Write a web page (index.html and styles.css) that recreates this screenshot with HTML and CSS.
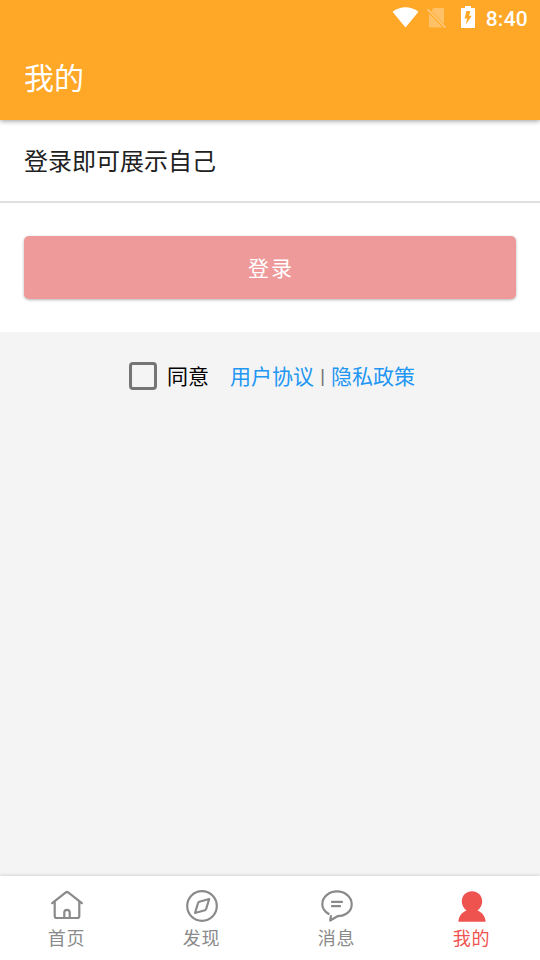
FILE: index.html
```html
<!DOCTYPE html>
<html lang="zh-CN">
<head>
<meta charset="utf-8">
<title>我的</title>
<link rel="stylesheet" href="styles.css">
</head>
<body>
<div class="app">
  <header class="header">
    <div class="status">
      <svg class="wifi" width="28" height="22" viewBox="0 0 28 22"><path fill="#fff" d="M.500 4.700C8-1.400 19-1.400 26.500 4.700L13.500 20.500Z"/></svg>
      <svg class="sim" width="20" height="22" viewBox="0 0 20 22"><path fill="#fff" fill-opacity=".3" d="M6.500 1H16a1 1 0 0 1 1 1V17L4.500 4ZM2 6.500 15.500 20.500H3a1 1 0 0 1-1-1Z"/><path stroke="#fff" stroke-opacity=".36" stroke-width="1.800" d="M.500 2.200 18.500 20.700"/></svg>
      <svg class="battery" width="14" height="22" viewBox="0 0 14 22"><path fill="#fff" fill-rule="evenodd" d="M4 0h6v2h3q1 0 1 1v18q0 1-1 1H1q-1 0-1-1V3q0-1 1-1h3ZM9.300 5H5.500L3.500 12.500h2.700L4.800 18.800 10.800 9.800H8Z"/></svg>
      <span class="clock">8:40</span>
    </div>
    <h1 class="title">我的</h1>
  </header>
  <section class="intro">登录即可展示自己</section>
  <section class="action"><button class="login">登录</button></section>
  <main class="main">
    <div class="terms">
      <span class="checkbox"></span>
      <span class="agree">同意</span>
      <a class="link">用户协议</a>
      <span class="divider">|</span>
      <a class="link">隐私政策</a>
    </div>
  </main>
  <nav class="nav">
    <a class="tab">
      <svg class="icon" viewBox="0 0 32 32"><path d="M1.200 13.200 14.500 2.600q1.500-1.200 3 0L30.800 13.200M3.700 11.500V26q0 2 2 2h20.600q2 0 2-2V11.500M13.300 28v-5.500q0-2.700 2.700-2.700t2.700 2.700V28"/></svg>
      <span class="label">首页</span>
    </a>
    <a class="tab">
      <svg class="icon" viewBox="0 0 32 32"><circle cx="16" cy="16" r="14.800"/><path d="M9 23 12 13.200q.3-1.100 1.300-1.400L23.200 9 20.200 18.800q-.3 1-1.300 1.400Z"/></svg>
      <span class="label">发现</span>
    </a>
    <a class="tab">
      <svg class="icon" viewBox="0 0 32 32"><path d="M7.500 23.800C3.600 21.400 1.300 18 1.300 14.200 1.300 7 7.900 1.300 16 1.300S30.700 7 30.700 14.200 24.300 26.200 16.500 26.200L9.200 30.500 9.900 26.200M11 11.900h10M11 16.200h8"/></svg>
      <span class="label">消息</span>
    </a>
    <a class="tab active">
      <svg class="icon solid" viewBox="0 0 32 32"><path d="M16 1.200C21.700 1.200 26.200 5.500 26.200 11.200c0 4-1.900 7.200-4.700 9.300C26 22.200 29 26 29.600 31.200q0 .600-.6.600H3q-.6 0-.6-.6C3 26 6 22.200 10.500 20.500c-2.800-2.100-4.700-5.300-4.700-9.300C5.800 5.500 10.300 1.200 16 1.200Z"/></svg>
      <span class="label">我的</span>
    </a>
  </nav>
</div>
</body>
</html>
```

FILE: styles.css
```css
* { box-sizing: border-box; }
body {
  margin: 0;
  font-family: Roboto, "Noto Sans CJK SC", sans-serif;
  background: #f4f4f4;
}
.app {
  width: 540px;
  height: 960px;
  display: flex;
  flex-direction: column;
  overflow: hidden;
}
.header {
  position: relative;
  z-index: 1;
  height: 120px;
  flex: none;
  background: #ffa726;
  color: #fff;
  box-shadow: 0 1px 5px rgba(0, 0, 0, .4);
}
.status {
  height: 36px;
  display: flex;
  align-items: center;
  justify-content: flex-end;
  padding-right: 12px;
}
.wifi { margin-right: 7px; }
.sim { margin-right: 14px; }
.battery { margin-right: 11px; margin-top: -2px; }
.clock {
  font-size: 21px;
  font-weight: 500;
  line-height: 36px;
  padding-top: 2px;
  letter-spacing: .25px;
}
.title {
  margin: 0;
  padding-left: 24px;
  font-size: 30px;
  font-weight: 400;
  line-height: 86px;
}
.intro {
  height: 83px;
  flex: none;
  padding-left: 24px;
  font-size: 24px;
  line-height: 84px;
  color: #212121;
  background: #fff;
  border-bottom: 2px solid #e0e0e0;
}
.action {
  height: 129px;
  flex: none;
  padding: 33px 24px;
  background: #fff;
}
.login {
  display: block;
  width: 100%;
  height: 63px;
  padding: 0 0 2px 2px;
  border: 0;
  border-radius: 5px;
  background: #ef9a9a;
  color: #fff;
  font-family: inherit;
  font-size: 21px;
  letter-spacing: 2px;
  box-shadow: 0 1px 3px rgba(0, 0, 0, .3);
}
.main { flex: 1; }
.terms {
  display: flex;
  align-items: center;
  height: 88px;
  padding-left: 129px;
  font-size: 21px;
  line-height: 30px;
  color: #000;
}
.checkbox {
  width: 28px;
  height: 28px;
  border: 3px solid #757575;
  border-radius: 4px;
}
.agree, .link, .divider { padding-top: 2px; }
.agree { margin: 0 21px 0 10px; }
.link { color: #2196f3; }
.divider {
  width: 17px;
  text-align: center;
  color: #757575;
}
.nav {
  height: 84px;
  flex: none;
  display: grid;
  grid-template-columns: repeat(4, 1fr);
  background: #fff;
  box-shadow: 0 -1px 3px rgba(0, 0, 0, .13);
}
.tab {
  display: flex;
  flex-direction: column;
  align-items: center;
  padding: 14px 1px 0 0;
  font-size: 18px;
  line-height: 30px;
  letter-spacing: .7px;
  color: #8a8a8a;
}
.label { padding: 2px 1px 0 0; }
.active { color: #ef5350; }
.icon {
  width: 32px;
  height: 32px;
  fill: none;
  stroke: currentColor;
  stroke-width: 2.2;
  stroke-linecap: round;
  stroke-linejoin: round;
}
.solid {
  fill: currentColor;
  stroke: none;
}
```
